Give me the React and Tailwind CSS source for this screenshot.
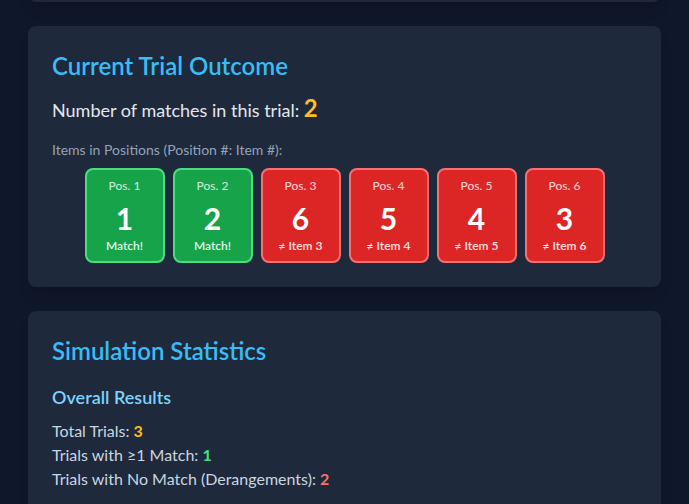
import React from 'react';

const positions = [
    { pos: 1, item: 1 },
    { pos: 2, item: 2 },
    { pos: 3, item: 6 },
    { pos: 4, item: 5 },
    { pos: 5, item: 4 },
    { pos: 6, item: 3 },
];

const PositionBox = ({ pos, item }) => {
    const match = pos === item;
    return (
        <div
            className={`w-20 h-[95px] rounded-lg border-2 flex flex-col items-center pt-2 ${
                match ? 'bg-[#16a34a] border-[#4ade80]' : 'bg-[#dc2626] border-[#f87171]'
            }`}
        >
            <span className="text-xs leading-4 text-white/80">Pos. {pos}</span>
            <span className="text-3xl leading-9 font-bold text-white mt-[6px]">{item}</span>
            <span className={`text-xs leading-4 font-semibold mt-[2px] ${match ? 'text-[#dcfce7]' : 'text-[#fee2e2]'}`}>
                {match ? 'Match!' : `≠ Item ${pos}`}
            </span>
        </div>
    );
};

export default function App() {
    return (
        <div
            className="min-h-screen bg-[#0f172a] px-7 overflow-hidden"
            style={{ fontFamily: 'Lato, "Noto Sans", sans-serif' }}
        >
            <div className="-mt-[100px] h-[102px] bg-[#1e293b] rounded-lg shadow-lg mb-6"></div>

            <div className="bg-[#1e293b] rounded-lg shadow-lg p-6 mb-6">
                <h2 className="text-2xl leading-8 font-semibold text-[#38bdf8] mb-3">Current Trial Outcome</h2>
                <p className="text-lg leading-7 text-[#e2e8f0] mb-4">
                    Number of matches in this trial:{' '}
                    <span className="text-2xl leading-7 font-bold text-[#fbbf24]">2</span>
                </p>
                <p className="text-sm leading-5 text-[#94a3b8] mb-2">Items in Positions (Position #: Item #):</p>
                <div className="flex justify-center gap-2">
                    {positions.map((p) => (
                        <PositionBox key={p.pos} pos={p.pos} item={p.item} />
                    ))}
                </div>
            </div>

            <div className="bg-[#1e293b] rounded-lg shadow-lg p-6">
                <h2 className="text-2xl leading-8 font-semibold text-[#38bdf8] mb-4">Simulation Statistics</h2>
                <h3 className="text-lg leading-7 font-semibold text-[#7dd3fc] mb-2">Overall Results</h3>
                <p className="text-base leading-6 text-[#cbd5e1]">
                    Total Trials: <span className="font-bold text-[#fbbf24]">3</span>
                </p>
                <p className="text-base leading-6 text-[#cbd5e1]">
                    Trials with ≥1 Match: <span className="font-bold text-[#4ade80]">1</span>
                </p>
                <p className="text-base leading-6 text-[#cbd5e1]">
                    Trials with No Match (Derangements): <span className="font-bold text-[#f87171]">2</span>
                </p>
            </div>
        </div>
    );
}
